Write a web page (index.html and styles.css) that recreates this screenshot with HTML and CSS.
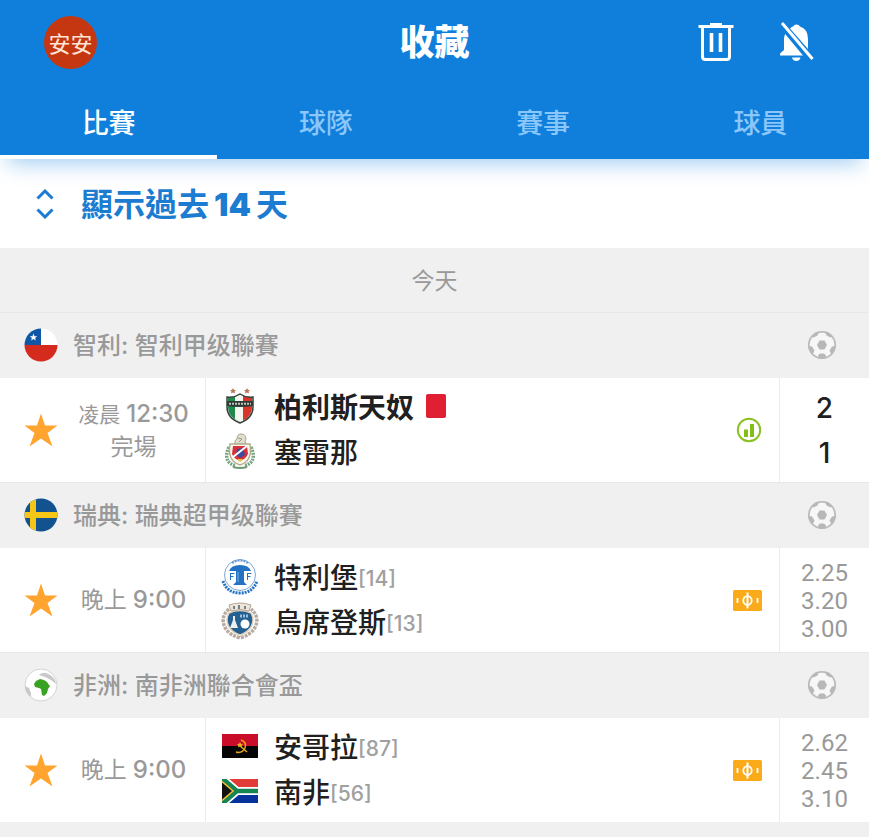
FILE: index.html
```
<!DOCTYPE html>
<html lang="zh-Hant">
<head>
<meta charset="utf-8">
<meta name="viewport" content="width=device-width, initial-scale=1">
<title>收藏</title>
<link rel="stylesheet" href="styles.css">
</head>
<body>
<svg width="0" height="0" class="defs" aria-hidden="true">
  <symbol id="star" viewBox="0 0 34 34"><path d="M17 0.500L21 12.500H33.500L23.500 20L28.500 33.500L17 25.500L5.500 33.500L10.500 20L0.500 12.500H13Z"/></symbol>
  <symbol id="ball" viewBox="0 0 30 30">
    <circle cx="15" cy="15" r="13.200" fill="#f7f7f7" stroke="#bcbcbc" stroke-width="1.800"/>
    <g fill="#b8b8b8">
      <path d="M12.500 10.500h5l2.500 4.500-2.500 4.400h-5L10 15z"/>
      <path d="M4.500 6.500L8.500 2.500 12 1.500 10.500 5.500 6.500 7.500z"/>
      <path d="M25.500 6.500L21.500 2.500 18 1.500 19.500 5.500 23.500 7.500z"/>
      <path d="M1.500 16L5 16.500 7.500 20.500 5.500 24.500 2.500 20z"/>
      <path d="M28.500 16L25 16.500 22.500 20.500 24.500 24.500 27.500 20z"/>
      <path d="M11 25.500L13 23.500h4l2 2-.5 3h-7z"/>
    </g>
  </symbol>
  <symbol id="ticket" viewBox="0 0 29 21">
    <rect width="29" height="21" rx="1.500" fill="#fbaa19"/>
    <g fill="none" stroke="#fff" stroke-width="1.800"><ellipse cx="14.500" cy="10.500" rx="4.200" ry="4.400"/><path d="M14.500 2.500v16" stroke-width="2"/><path d="M4.500 8v5M24.500 8v5"/></g>
  </symbol>
</svg>

<header class="header">
  <div class="topbar">
    <a class="avatar" href="#">安安</a>
    <h1 class="title">收藏</h1>
    <div class="actions">
      <button class="icon-button" type="button" aria-label="刪除">
        <svg width="36" height="40" viewBox="0 0 36 40" fill="none" stroke="#fff"><path d="M0.500 4.500H35.500" stroke-width="3"/><path d="M12 2.500H24" stroke-width="3"/><path d="M4.500 5V34.500Q4.500 37.500 7.500 37.500H28.500Q31.500 37.500 31.500 34.500V5" stroke-width="3"/><path d="M13.500 11V30M22.500 11V30" stroke-width="3.600"/></svg>
      </button>
      <button class="icon-button" type="button" aria-label="關閉通知">
        <svg width="36" height="40" viewBox="0 0 36 40"><path fill="#fff" d="M1 33.500V31.500L5 28V17Q5 14 6.200 12L24 33.500ZM11 6.500Q12.500 5 14 4.500Q15 2.500 17.500 2.500Q20 2.500 21 4.500Q29 7 29 17V27Z"/><path fill="#fff" d="M13 35.500H21.500Q20.500 39 17.200 39Q14 39 13 35.500Z"/><path d="M3 1L33.500 37" stroke="#fff" stroke-width="3"/></svg>
      </button>
    </div>
  </div>
  <nav class="tabs">
    <a class="tab tab-active" href="#">比賽</a>
    <a class="tab" href="#">球隊</a>
    <a class="tab" href="#">賽事</a>
    <a class="tab" href="#">球員</a>
  </nav>
</header>

<main>
  <button class="history" type="button">
    <svg width="18" height="30" viewBox="0 0 18 30" fill="none" stroke="currentColor" stroke-width="3"><path d="M1.500 9.500L9 2L16.500 9.500M1.500 20.500L9 28L16.500 20.500"/></svg>
    <span class="history-text">顯示過去<span class="count">14</span>天</span>
  </button>
  <h2 class="day">今天</h2>

  <section>
    <h3 class="league">
      <svg class="flag" viewBox="0 0 34 34"><clipPath id="round"><circle cx="17" cy="17" r="16.500"/></clipPath><g clip-path="url(#round)"><path fill="#fff" d="M0 0h34v17H0z"/><path fill="#d52b1e" d="M0 17h34v17H0z"/><path fill="#0f57a5" d="M0 0h17v17H0z"/><path fill="#fff" d="M9.500 5.500l1 2.700h2.800l-2.200 1.700.8 2.700-2.400-1.600-2.400 1.600.8-2.700-2.200-1.700h2.800z"/></g></svg>
      <span class="league-name">智利: 智利甲级聯賽</span>
      <svg class="ball"><use href="#ball"/></svg>
    </h3>
    <article class="match">
      <button class="favorite" type="button" aria-label="收藏"><svg width="34" height="34"><use href="#star"/></svg></button>
      <div class="time"><span class="kickoff-small">凌晨<span class="clock">12:30</span></span><span>完場</span></div>
      <div class="teams">
        <div class="team team-winner">
          <svg class="crest" viewBox="0 0 38 38"><path fill="#b87555" d="M12 1l1 2h2l-1.500 1.500.5 2-2-1-2 1 .5-2L9 3h2zM26 1l1 2h2l-1.500 1.500.5 2-2-1-2 1 .5-2L23 3h2z"/><path fill="#1d8a4b" d="M7 10q7 1 12-3v28Q7 30 7 20z"/><path fill="#f5f5f0" d="M14 9.500l5-2.500 3 1.500v25l-3 1.500-5-3z"/><path fill="#d8352d" d="M22 8.500q4 2 9 1.500v10q0 9-9 14z"/><path fill="#2d3932" d="M6 14h26v5q-13 2-26 0z"/><path stroke="#bcc5bc" stroke-width="2" stroke-dasharray="2 1" d="M8 16.800h22"/><path fill="none" stroke="#344038" stroke-width="1.500" d="M6 10q7 1 13-3 6 4 13 3v10q0 11-13 16Q6 31 6 20z"/></svg>
          <span>柏利斯天奴</span><i class="red-card"></i>
        </div>
        <div class="team">
          <svg class="crest" viewBox="0 0 38 38"><path d="M8 15Q1 30 15 34M30 15Q37 30 23 34" fill="none" stroke="#78a481" stroke-width="3.500" stroke-dasharray="2 1"/><path fill="#e2dfcf" stroke="#aaa58d" d="M14 12q-1-4 2-5 0-5 4-5 5 0 5 5-2 2 0 5z"/><path d="M17 6l4 1-3 3" fill="none" stroke="#9b9783"/><path fill="#faf8ef" stroke="#b3ad8e" stroke-width="1.500" d="M9 12h20q3 17-10 21Q6 29 9 12z"/><path fill="#d82f38" d="M12 14h14l1 8q-2 5-8 7-6-2-8-7z"/><path fill="#3c4aa0" d="M16 17l6-1 2 7-5 3-4-3z"/><path d="M12 25L26 14" stroke="#fff" stroke-width="2"/><path fill="#e8bf45" d="M16 27h6l-3 3z"/><path d="M12 35q7 2 14 0" fill="none" stroke="#6d9971" stroke-width="2"/></svg>
          <span>塞雷那</span>
        </div>
      </div>
      <div class="extra"><svg width="26" height="26" viewBox="0 0 26 26"><circle cx="13" cy="13" r="11.200" fill="none" stroke="#8bc123" stroke-width="2"/><path fill="#83be17" d="M8 12.500h4V20H8zM14 7h4v13h-4z"/></svg></div>
      <div class="score"><span>2</span><span>1</span></div>
    </article>
  </section>

  <section>
    <h3 class="league">
      <svg class="flag" viewBox="0 0 34 34"><g clip-path="url(#round)"><path fill="#11528f" d="M0 0h34v34H0z"/><path fill="#f5c518" d="M6 0h6v34H6zM0 14h34v6H0z"/></g></svg>
      <span class="league-name">瑞典: 瑞典超甲级聯賽</span>
      <svg class="ball"><use href="#ball"/></svg>
    </h3>
    <article class="match">
      <button class="favorite" type="button" aria-label="收藏"><svg width="34" height="34"><use href="#star"/></svg></button>
      <div class="time"><span>晚上<span class="clock">9:00</span></span></div>
      <div class="teams">
        <div class="team">
          <svg class="crest" viewBox="0 0 38 38"><circle cx="19" cy="18" r="15.500" fill="#fff" stroke="#7ea6d4"/><path d="M11 6q8-5 16 0" fill="none" stroke="#6799d2" stroke-width="2" stroke-dasharray="2 1"/><path fill="#2472c4" d="M8 14q2-6 11-6t11 6h-7v11l3 3H12l3-3V14z"/><path d="M17 15v10" stroke="#81afe0"/><path d="M9.500 16v7M9.500 16.500h4M9.500 19.500h3M26.500 16v7M26.500 16.500h4M26.500 19.500h3" stroke="#2472c4"/><path d="M2 24q4 12 17 12t17-12" fill="none" stroke="#2472c4" stroke-width="3" stroke-dasharray="2 1"/></svg>
          <span>特利堡</span><span class="rank">[14]</span>
        </div>
        <div class="team">
          <svg class="crest" viewBox="0 0 38 38"><path d="M8 7Q-2 16 5 27q4 6 14 9 10-3 14-9 7-11-3-20" fill="none" stroke="#b7aaa0" stroke-width="3.500" stroke-dasharray="3 1"/><path fill="#246092" stroke="#dfd1ba" stroke-width="1.500" d="M8 11q11-5 22 0 4 7 0 14-4 6-11 8-7-2-11-8-4-7 0-14z"/><path fill="#eee6dc" stroke="#b3a293" d="M8 3q11-4 22 0l-2 6q-9-3-18 0z"/><path d="M13 4v3M18 3v4M24 4v3" stroke="#777f86" stroke-width="2"/><path d="M19 14h9" stroke="#9dbdd6" stroke-width="3" stroke-dasharray="2 1"/><path d="M12 14h2v4l3 8H9l3-8z" fill="#eee"/><circle cx="24" cy="22" r="4.500" fill="#fff"/></svg>
          <span>烏席登斯</span><span class="rank">[13]</span>
        </div>
      </div>
      <div class="extra"><svg width="29" height="21"><use href="#ticket"/></svg></div>
      <div class="odds"><span>2.25</span><span>3.20</span><span>3.00</span></div>
    </article>
  </section>

  <section>
    <h3 class="league">
      <svg class="flag" viewBox="0 0 34 34"><circle cx="17" cy="17" r="16" fill="#fff" stroke="#d4d4d4"/><path fill="#c9c9c9" d="M15 7q3-3 7-2 6 2 9 7l1 4-5-4-6-3zM1 18l4 2 2 5v4q-6-4-6-11z"/><path fill="#38a222" d="M12 13l4-2 4 1 3 2 2 3 1 1-2 3-1 4-3 3-2-1-1-6-2-1-4-1-1-3z"/></svg>
      <span class="league-name">非洲: 南非洲聯合會盃</span>
      <svg class="ball"><use href="#ball"/></svg>
    </h3>
    <article class="match">
      <button class="favorite" type="button" aria-label="收藏"><svg width="34" height="34"><use href="#star"/></svg></button>
      <div class="time"><span>晚上<span class="clock">9:00</span></span></div>
      <div class="teams">
        <div class="team">
          <svg class="crest" viewBox="0 0 38 38"><path fill="#ca0d29" d="M1 7h36v12H1z"/><path fill="#050505" d="M1 19h36v12H1z"/><path d="M20 13q6 2 4 8-3 6-9 4M17 17l9 8" fill="none" stroke="#e6a818" stroke-width="1.500"/><path fill="#e6b51d" d="M19 15l1 2h2l-1.500 1.500.5 2-2-1-2 1 .5-2L16 17h2z"/></svg>
          <span>安哥拉</span><span class="rank">[87]</span>
        </div>
        <div class="team">
          <svg class="crest" viewBox="0 0 38 38"><clipPath id="banner"><path d="M1 7h36v24H1z"/></clipPath><g clip-path="url(#banner)"><path fill="#e13c35" d="M1 7h36v12H1z"/><path fill="#06339b" d="M1 19h36v12H1z"/><path d="M1 6l15 13L1 32M16 19h21" fill="none" stroke="#fff" stroke-width="8"/><path fill="#111" d="M1 9l11 10L1 29z"/><path d="M1 6l15 13L1 32M15 19h22" fill="none" stroke="#168553" stroke-width="4.500"/><path d="M1 9.500l11 9.500-11 9.500" fill="none" stroke="#f4bd30" stroke-width="1.500"/></g></svg>
          <span>南非</span><span class="rank">[56]</span>
        </div>
      </div>
      <div class="extra"><svg width="29" height="21"><use href="#ticket"/></svg></div>
      <div class="odds"><span>2.62</span><span>2.45</span><span>3.10</span></div>
    </article>
  </section>
</main>
</body>
</html>
```
FILE: styles.css
```
* { box-sizing: border-box; }
body {
  margin: 0;
  min-height: 100vh;
  background: #f0f0f0;
  color: #202020;
  font-family: Inter, "Noto Sans CJK TC", sans-serif;
}
button { border: 0; padding: 0; background: none; font: inherit; color: inherit; }
a { color: inherit; text-decoration: none; }
svg { display: block; flex: none; }
h1, h2, h3 { margin: 0; }
.defs { position: absolute; }

.header {
  position: relative;
  background: #107fdb;
  color: #fff;
  box-shadow: 0 12px 20px -8px rgba(16, 127, 219, 0.4);
}
.topbar {
  display: grid;
  grid-template-columns: 1fr auto 1fr;
  align-items: center;
  height: 84px;
  padding: 0 44px;
}
.avatar {
  display: flex;
  align-items: center;
  justify-content: center;
  width: 53px;
  height: 53px;
  border-radius: 50%;
  background: #c53710;
  color: #ffe6d8;
  font-size: 22px;
  font-weight: 400;
}
.title { font-size: 35px; font-weight: 900; line-height: 48px; }
.actions { display: flex; justify-content: flex-end; gap: 45px; padding-right: 10px; }
.tabs { display: grid; grid-template-columns: repeat(4, 1fr); height: 75px; }
.tab {
  padding-top: 20px;
  border-bottom: 4px solid transparent;
  color: #8bc7fa;
  font-size: 27px;
  font-weight: 500;
  line-height: 40px;
  text-align: center;
}
.tab-active { border-color: #fff; color: #fff; }

.history {
  display: flex;
  align-items: center;
  gap: 27px;
  width: 100%;
  height: 89px;
  padding-left: 36px;
  background: #fff;
  color: #1b7cd1;
  font-size: 32px;
  font-weight: 700;
}
.history-text { padding-bottom: 4px; }
.count { margin: 0 5px; font-weight: 900; }
.day {
  height: 64px;
  color: #999;
  font-size: 23px;
  font-weight: 400;
  line-height: 66px;
  text-align: center;
}
.league {
  display: flex;
  align-items: center;
  height: 66px;
  padding: 0 32px 2px 24px;
  border-top: 1px solid #e8e8e8;
  color: #999;
  font-size: 24px;
  font-weight: 500;
}
.flag { width: 34px; height: 34px; margin-right: 15px; }
.league-name { flex: 1; padding-bottom: 2px; }
.ball { width: 30px; height: 30px; }

.match {
  display: grid;
  grid-template-columns: 62px 144px 1fr 62px 89px;
  height: 104px;
  background: #fff;
}
.favorite { display: flex; align-items: center; padding-left: 24px; fill: #ffa42e; }
.time {
  display: flex;
  flex-direction: column;
  align-items: center;
  justify-content: center;
  border-right: 1px solid #ebebeb;
  color: #999;
  font-size: 23px;
  line-height: 33px;
}
.kickoff-small { font-size: 21px; }
.clock { margin-left: 6px; font-size: 24px; font-weight: 500; }
.teams { display: flex; flex-direction: column; justify-content: center; padding: 0 0 3px 15px; }
.team { display: flex; align-items: center; height: 45px; font-size: 28px; font-weight: 500; }
.team-winner { font-weight: 700; }
.crest { width: 38px; height: 38px; margin-right: 15px; }
.red-card { width: 20px; height: 24px; margin-left: 12px; border-radius: 2px; background: #e01f33; }
.rank { padding-top: 4px; color: #a0a0a0; font-size: 21px; font-weight: 500; }
.extra { display: flex; align-items: center; justify-content: flex-end; padding-right: 17px; border-right: 1px solid #ebebeb; }
.score, .odds { display: flex; flex-direction: column; align-items: center; justify-content: center; padding-top: 2px; }
.score { font-size: 28px; font-weight: 500; line-height: 45px; }
.odds { color: #999; font-family: Roboto, sans-serif; font-size: 24px; line-height: 28px; }
```
